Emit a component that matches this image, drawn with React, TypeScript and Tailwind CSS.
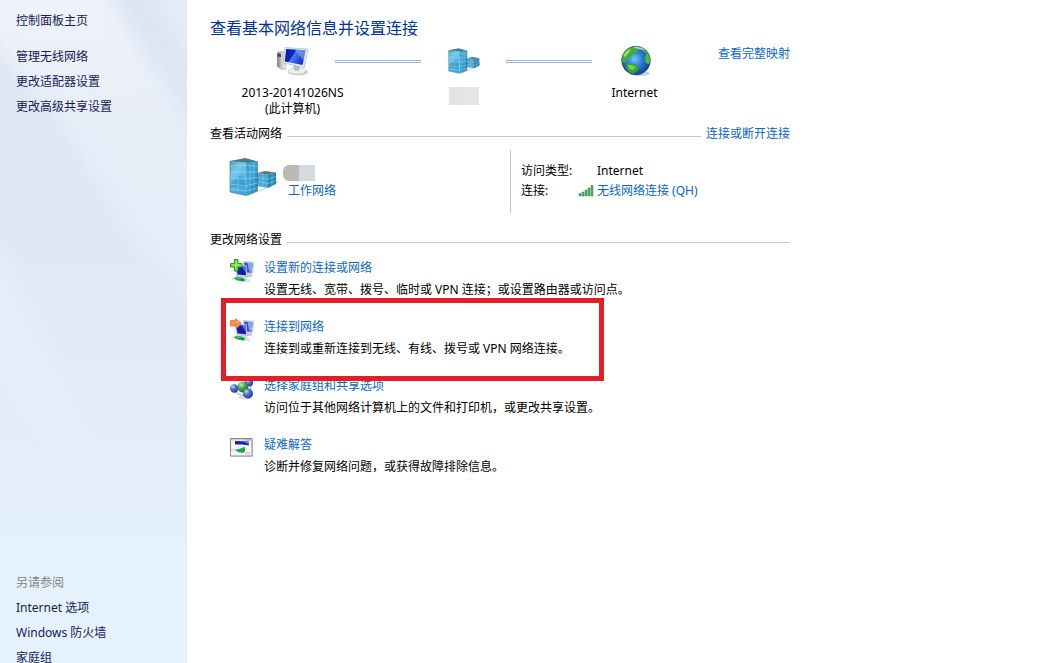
import { ReactNode } from 'react';

interface NetworkTask {
  readonly title: string;
  readonly description: string;
  readonly icon: ReactNode;
  readonly highlighted?: boolean;
}

const SIDEBAR_LINKS = ['管理无线网络', '更改适配器设置', '更改高级共享设置'];
const SEE_ALSO_LINKS = ['Internet 选项', 'Windows 防火墙', '家庭组'];

function SidebarBackdrop() {
  return (
    <svg
      className="absolute inset-0 h-full w-full"
      viewBox="0 0 187 663"
      preserveAspectRatio="none"
      aria-hidden="true"
    >
      <defs>
        <linearGradient id="side-base" x1="0" y1="0" x2="0" y2="1">
          <stop offset="0" stopColor="#dce5f3" />
          <stop offset="0.3" stopColor="#dee8f5" />
          <stop offset="0.6" stopColor="#e1ecf8" />
          <stop offset="0.85" stopColor="#e6f1fe" />
          <stop offset="1" stopColor="#e6f1fe" />
        </linearGradient>
        <linearGradient id="side-ray" x1="0" y1="0" x2="0" y2="1">
          <stop offset="0" stopColor="#f0f4fa" />
          <stop offset="0.4" stopColor="#e8eef8" />
          <stop offset="1" stopColor="#e3ecf9" />
        </linearGradient>
        <filter id="side-soft" x="-20%" y="-20%" width="140%" height="140%">
          <feGaussianBlur stdDeviation="9" />
        </filter>
      </defs>
      <rect width="187" height="663" fill="url(#side-base)" />
      <g filter="url(#side-soft)">
        <path d="M-30 -30H95L145 55L215 165V330L130 230L60 120L-30 20Z" fill="url(#side-ray)" />
        <path d="M135 -30H215V100Z" fill="#e4ebf6" />
        <path d="M-30 215L10 270L90 440L50 450L-30 350Z" fill="#e7edf9" />
      </g>
    </svg>
  );
}

function ComputerIcon() {
  return (
    <svg className="h-8 w-8" viewBox="0 0 32 32" aria-hidden="true">
      <defs>
        <linearGradient id="pc-screen" x1="0" y1="0" x2="1" y2="0.5">
          <stop offset="0" stopColor="#0717a0" />
          <stop offset="0.45" stopColor="#0c24c8" />
          <stop offset="0.5" stopColor="#4d7be8" />
          <stop offset="1" stopColor="#1733cf" />
        </linearGradient>
        <linearGradient id="pc-case" x1="0" y1="0" x2="1" y2="0">
          <stop offset="0" stopColor="#73767b" />
          <stop offset="0.5" stopColor="#c9ccd0" />
          <stop offset="1" stopColor="#f0f1f3" />
        </linearGradient>
      </defs>
      <path d="M0 8L3 6.500L9 7V24L5 24.500L0 21.500Z" fill="url(#pc-case)" stroke="#aaaeb3" strokeWidth="0.6" />
      <path d="M0.500 8.500L4 9V12L0.500 11.500Z" fill="#41454b" />
      <path d="M1 13.500L3.500 14V15.500L1 15Z" fill="#72ce24" />
      <ellipse cx="21" cy="27" rx="10" ry="3.300" fill="#c4c6c9" />
      <ellipse cx="20" cy="26" rx="9" ry="3.200" fill="#eceef0" stroke="#bfc2c6" strokeWidth="0.5" />
      <path d="M16 19L23 20.500L22 26L17 25.500Z" fill="#b9bdc3" />
      <path d="M8 2.500L31 4L27.500 22.500L6 18Z" fill="#e7e9ed" stroke="#b4b8bf" strokeWidth="0.7" />
      <path d="M9.200 4L28.500 5.300L25.600 20L7.700 16.500Z" fill="url(#pc-screen)" />
      <path d="M17.500 4.600L28.500 5.300L26.500 15.500Z" fill="#8fb0f4" opacity="0.55" />
    </svg>
  );
}

function OfficeIcon({ className }: { readonly className: string }) {
  return (
    <svg className={className} viewBox="0 0 48 40" aria-hidden="true">
      <defs>
        <linearGradient id="office-front" x1="0" y1="0" x2="0.4" y2="1">
          <stop offset="0" stopColor="#4a9cbd" />
          <stop offset="0.4" stopColor="#74c8ea" />
          <stop offset="1" stopColor="#3da5dc" />
        </linearGradient>
        <linearGradient id="office-side" x1="0" y1="0" x2="1" y2="1">
          <stop offset="0" stopColor="#3d8dae" />
          <stop offset="0.4" stopColor="#39a9dd" />
          <stop offset="1" stopColor="#1f78a8" />
        </linearGradient>
      </defs>
      <path d="M18 38L30 34L46 26L48 21V26L34 33L19 39Z" fill="#b9b5ae" opacity="0.7" />
      <path d="M28 16L39 17.500V31L28 29Z" fill="#4aa9d2" />
      <path d="M39 17.500L47 15.500V27L39 31Z" fill="#2786b4" />
      <path d="M28 16L36 14L47 15.500L39 17.500Z" fill="#5c7684" />
      <path
        d="M28 20.500L39 22L47 19.500M28 25L39 26.500L47 23.500M34 17V30M43 16.500V29"
        fill="none"
        stroke="#9bd4eb"
        strokeWidth="0.5"
      />
      <path d="M1 4L17 2V38.500L1 35Z" fill="url(#office-front)" />
      <path d="M17 2L28.500 4.500V34L17 38.500Z" fill="url(#office-side)" />
      <path d="M1 4L16 1L28.500 4.500L17 5.500Z" fill="#4b7b90" />
      <path d="M2 25L8 21L12 18L16 25V30H2Z" fill="#2a83b2" opacity="0.4" />
      <path
        d="M1 9L17 8L28.500 9.500M1 15H28.500M1 21L17 22L28.500 20.500M1 27L17 29L28.500 26M1 32L17 34L28.500 31"
        fill="none"
        stroke="#a5dcf1"
        strokeWidth="0.6"
      />
      <path d="M9 5V36.500M17 5.500V38.500M21 5V37M25 5V35.500" fill="none" stroke="#8acde8" strokeWidth="0.5" />
      <path d="M1 4V35L17 38.500L28.500 34V4.500" fill="none" stroke="#38718c" strokeWidth="0.6" />
    </svg>
  );
}

function GlobeIcon() {
  return (
    <svg className="h-8 w-8" viewBox="0 0 32 32" aria-hidden="true">
      <defs>
        <radialGradient id="globe-sea" cx="0.45" cy="0.45" r="0.6">
          <stop offset="0" stopColor="#6cc6f5" />
          <stop offset="0.45" stopColor="#2c7dd4" />
          <stop offset="1" stopColor="#123a91" />
        </radialGradient>
        <clipPath id="globe-clip">
          <circle cx="17" cy="15.500" r="14.500" />
        </clipPath>
      </defs>
      <ellipse cx="21" cy="28.500" rx="10" ry="2.500" fill="#a9adb3" opacity="0.6" />
      <circle cx="17" cy="15.500" r="14.500" fill="url(#globe-sea)" />
      <g clipPath="url(#globe-clip)">
        <path
          d="M2 16L3 8L8 3L14 1L19 2L17 4L20 5L17 8L13 8L12 11L9 13L7 17L5 18Z"
          fill="#45ae32"
        />
        <path d="M4 10L8 5L12 4L10 8L6 12Z" fill="#91df55" />
        <path d="M21 2L27 5L30 9L26 8L23 5Z" fill="#4fb13b" />
        <path d="M27 9L31 8L32 14L30 19L27 18L26 14Z" fill="#54b93b" />
        <path d="M8 19L12 18L17 20L20 22L18 26L14 29L10 27L7 23Z" fill="#35a52e" />
        <path d="M9 20L13 20L17 22L14 25L10 24Z" fill="#6fd24b" />
        <path d="M14 2Q22 0 26 5Q19 5 14 2Z" fill="#dff3ff" opacity="0.7" />
      </g>
      <circle cx="17" cy="15.500" r="14.200" fill="none" stroke="#183f82" strokeWidth="0.6" opacity="0.6" />
    </svg>
  );
}

function SignalIcon() {
  return (
    <svg className="h-4 w-4" viewBox="0 0 16 16" aria-hidden="true">
      <path
        d="M1 10.500H3V13H1ZM4 9H6V13H4ZM7 7H9V13H7ZM10 5H12V13H10ZM13 2.500H15V13H13Z"
        fill="#5cb86a"
        stroke="#21773a"
        strokeWidth="0.5"
      />
    </svg>
  );
}

// Pair of monitors on a green cable, shared by both connection tasks
function LinkedMonitors() {
  return (
    <>
      <path d="M15 15L21 14.500L22.500 17.500L17 18.500Z" fill="#c6cad1" />
      <path d="M13 2.500L24 3L22.500 15L15 14.500Z" fill="#dfe4ee" stroke="#b4bbc9" strokeWidth="0.5" />
      <path d="M14 3.500L22.800 4L21.600 13.800L15.500 13.500Z" fill="#2c4fd2" />
      <path d="M17.500 3.700L22.800 4L21.600 13.800L19 12Z" fill="#86a3ec" />
      <path d="M9 16.500H16L18 21L10 20Z" fill="#cdd1d8" />
      <path d="M5 6L16.500 6.500L17 17.500L6.500 16.500Z" fill="#d7ddea" stroke="#a4abbb" strokeWidth="0.5" />
      <path d="M6 7L15.600 7.500L16 16.300L7.500 15.500Z" fill="#101fae" />
      <path d="M12 7.300L15.600 7.500L15.900 14Z" fill="#5b7be2" />
      <path d="M0.500 19.500L5 17.500L12 18L20 20.500V23.500L14 23L4 21.500Z" fill="#dfe2e4" />
      <path d="M4 19.500L7 17.500L13 19L15.500 21L13.500 22.500L8 21.500Z" fill="#169a43" />
      <path d="M5.500 19.300L8 18.300L12 19.500L8 20Z" fill="#5ad07f" />
    </>
  );
}

function NewConnectionIcon() {
  return (
    <svg className="h-6 w-6" viewBox="0 0 24 24" aria-hidden="true">
      <LinkedMonitors />
      <path
        d="M4.500 0.500H8V4.500H12V8H8V12H4.500V8H0.500V4.500H4.500Z"
        fill="#6ad63a"
        stroke="#2a9a22"
        strokeWidth="1"
      />
      <path d="M6 2V10M2 6H10.500" stroke="#b2f283" strokeWidth="1" />
    </svg>
  );
}

function ConnectIcon() {
  return (
    <svg className="h-6 w-6" viewBox="0 0 24 24" aria-hidden="true">
      <LinkedMonitors />
      <path
        d="M0.500 2.500H5.500V0.500L11.500 5.500L6.500 10.500V8H0.500Z"
        fill="#f28a4c"
        stroke="#dd6a2c"
        strokeWidth="0.7"
      />
      <path d="M1.500 3.800H6.500V2.500L9.500 5.200Z" fill="#ffb183" />
    </svg>
  );
}

function HomegroupIcon() {
  return (
    <svg className="h-6 w-6" viewBox="0 0 24 24" aria-hidden="true">
      <defs>
        <radialGradient id="ball-blue" cx="0.35" cy="0.3" r="0.75">
          <stop offset="0" stopColor="#c3d3f8" />
          <stop offset="0.4" stopColor="#5275cf" />
          <stop offset="1" stopColor="#20338f" />
        </radialGradient>
        <radialGradient id="ball-green" cx="0.35" cy="0.3" r="0.75">
          <stop offset="0" stopColor="#c2f0b8" />
          <stop offset="0.45" stopColor="#44a849" />
          <stop offset="1" stopColor="#17702b" />
        </radialGradient>
      </defs>
      <ellipse cx="15" cy="20.500" rx="7" ry="2" fill="#d8dae0" />
      <path d="M4 13Q10 20 17 18Q23 12 20 6" fill="none" stroke="#b7c3e2" strokeWidth="1.500" />
      <circle cx="19" cy="5.500" r="4" fill="url(#ball-blue)" />
      <circle cx="4.300" cy="11.500" r="4.200" fill="url(#ball-blue)" />
      <circle cx="13" cy="10" r="5.500" fill="url(#ball-green)" />
      <circle cx="18" cy="16.500" r="5" fill="url(#ball-blue)" />
    </svg>
  );
}

function TroubleshootIcon() {
  return (
    <svg className="h-6 w-6" viewBox="0 0 24 24" aria-hidden="true">
      <path d="M1 3H23V21H1Z" fill="#d4d6d8" />
      <path d="M0.500 2.500H22V20H0.500Z" fill="#f6f8fa" stroke="#83888f" strokeWidth="1" />
      <path d="M1 3H21.500V4.500H1Z" fill="#c8d4e2" />
      <path d="M15.500 4H16.500M17.500 4H18.500M19.500 4H20.500" stroke="#56606d" strokeWidth="1" />
      <path d="M5 5L18.500 5.500L19 9.500L12 8.500L5 8.500Z" fill="#1724a5" />
      <path d="M13 5.300L18.500 5.500L19 8.500Z" fill="#6584df" />
      <path d="M1 12.500L7 13.500L12 11.500L15 11V16L9 16.500L1 14.500Z" fill="#c9efd3" />
      <path d="M5 13.500L9 13L15 11V15.500L13 17L8 16Z" fill="#1ba84d" />
      <path d="M14 17L20 15.500V18.500H15.500Z" fill="#cfd4da" />
    </svg>
  );
}

const TASKS: NetworkTask[] = [
  {
    title: '设置新的连接或网络',
    description: '设置无线、宽带、拨号、临时或 VPN 连接；或设置路由器或访问点。',
    icon: <NewConnectionIcon />,
  },
  {
    title: '连接到网络',
    description: '连接到或重新连接到无线、有线、拨号或 VPN 网络连接。',
    icon: <ConnectIcon />,
    highlighted: true,
  },
  {
    title: '选择家庭组和共享选项',
    description: '访问位于其他网络计算机上的文件和打印机，或更改共享设置。',
    icon: <HomegroupIcon />,
  },
  {
    title: '疑难解答',
    description: '诊断并修复网络问题，或获得故障排除信息。',
    icon: <TroubleshootIcon />,
  },
];

function TextLink({ children, className = '' }: { readonly children: ReactNode; readonly className?: string }) {
  return (
    <a href="#" className={`whitespace-nowrap text-[#0c66c6] hover:underline ${className}`}>
      {children}
    </a>
  );
}

function SectionHeading({ title, action }: { readonly title: string; readonly action?: ReactNode }) {
  return (
    <div className="flex items-center gap-[5px] leading-5">
      <h2 className="whitespace-nowrap">{title}</h2>
      <div className="mt-[5px] h-px flex-1 bg-[#c8c8c8]" />
      {action}
    </div>
  );
}

function MapConnector() {
  return <div className="mt-5 h-[3px] w-[86px] shrink-0 border-y border-[#9ab4d2]" />;
}

function MapNode({ icon, children }: { readonly icon: ReactNode; readonly children: ReactNode }) {
  return (
    <div className="flex w-[85px] shrink-0 flex-col items-center gap-2 pt-[5px] text-center leading-4 whitespace-nowrap">
      {icon}
      <div>{children}</div>
    </div>
  );
}

function Sidebar() {
  return (
    <aside className="relative h-screen w-[187px] shrink-0 overflow-hidden">
      <SidebarBackdrop />
      <nav className="relative flex h-full flex-col px-4 pt-2 leading-[25px] text-[#151c55]">
        <a href="#" className="hover:underline">
          控制面板主页
        </a>
        <ul className="mt-[11px]">
          {SIDEBAR_LINKS.map((label) => (
            <li key={label}>
              <a href="#" className="hover:underline">
                {label}
              </a>
            </li>
          ))}
        </ul>
        <div className="mt-auto -mb-[7px]">
          <h2 className="text-[#838383]">另请参阅</h2>
          <ul>
            {SEE_ALSO_LINKS.map((label) => (
              <li key={label}>
                <a href="#" className="hover:underline">
                  {label}
                </a>
              </li>
            ))}
          </ul>
        </div>
      </nav>
    </aside>
  );
}

export default function App() {
  return (
    <div className="flex h-screen overflow-hidden bg-white font-['Noto_Sans','Noto_Sans_CJK_SC',sans-serif] text-xs text-black">
      <Sidebar />
      <main className="min-w-0 flex-1 pt-4 pl-[23px]">
        <div className="max-w-[580px]">
          <h1 className="text-base leading-6 text-[#003399]">查看基本网络信息并设置连接</h1>

          <div className="flex items-start pl-10">
            <MapNode icon={<ComputerIcon />}>
              2013-20141026NS
              <br />
              (此计算机)
            </MapNode>
            <MapConnector />
            <MapNode icon={<OfficeIcon className="h-8 w-8" />}>
              <div className="mt-0.5 flex h-[18px] w-[30px]">
                <div className="flex-1 bg-[#e3e3e3]" />
                <div className="flex-1 bg-[#e6e6e6]" />
              </div>
            </MapNode>
            <MapConnector />
            <MapNode icon={<GlobeIcon />}>Internet</MapNode>
            <TextLink className="mt-1 ml-auto leading-5">查看完整映射</TextLink>
          </div>

          <section className="mt-[7px]">
            <SectionHeading title="查看活动网络" action={<TextLink>连接或断开连接</TextLink>} />
            <div className="mt-1.5 flex h-[63px] leading-5">
              <div className="flex w-[300px] pt-[7px] pl-[19px]">
                <OfficeIcon className="h-10 w-12" />
                <div className="ml-1.5 pt-2">
                  <div className="flex h-4 w-8 overflow-hidden rounded-l-md">
                    <div className="flex-1 bg-[#bdb9b5]" />
                    <div className="flex-1 bg-[#d5d9e0]" />
                  </div>
                  <TextLink className="ml-[5px]">工作网络</TextLink>
                </div>
              </div>
              <dl className="grid flex-1 grid-cols-[57px_1fr] content-start border-l border-[#c8c8c8] pt-[11px] pl-2.5">
                <dt>访问类型:</dt>
                <dd className="pl-[19px]">Internet</dd>
                <dt>连接:</dt>
                <dd className="flex items-center gap-[3px]">
                  <SignalIcon />
                  <TextLink>无线网络连接 (QH)</TextLink>
                </dd>
              </dl>
            </div>
          </section>

          <section className="mt-[17px]">
            <SectionHeading title="更改网络设置" />
            <ul className="mt-2 flex flex-col gap-[17px] pl-5">
              {TASKS.map((task) => (
                <li key={task.title} className="relative flex gap-2.5 leading-5">
                  <div className="shrink-0 pt-px">{task.icon}</div>
                  <div className="flex flex-col gap-0.5">
                    <TextLink>{task.title}</TextLink>
                    <p>{task.description}</p>
                  </div>
                  {task.highlighted && (
                    <div className="pointer-events-none absolute -top-[19px] -left-[9px] z-10 h-[83px] w-[383px] border-5 border-[#e41e26]" />
                  )}
                </li>
              ))}
            </ul>
          </section>
        </div>
      </main>
    </div>
  );
}
